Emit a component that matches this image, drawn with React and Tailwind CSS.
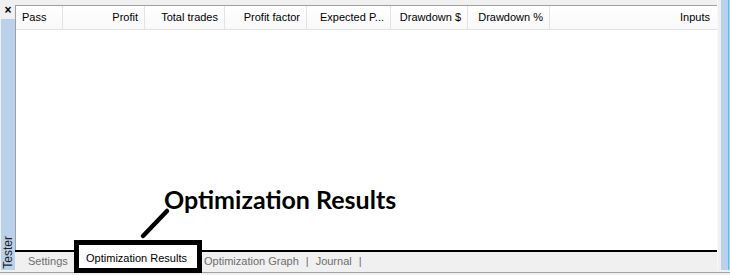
import React from "react";

const cols = [
  { label: "Pass", w: "w-[47px]", align: "text-left pl-[6px] justify-start" },
  { label: "Profit", w: "w-[82px]", align: "text-right pr-[6px] justify-end" },
  { label: "Total trades", w: "w-[80px]", align: "text-right pr-[6px] justify-end" },
  { label: "Profit factor", w: "w-[82px]", align: "text-right pr-[6px] justify-end" },
  { label: "Expected P...", w: "w-[84px]", align: "text-right pr-[6px] justify-end" },
  { label: "Drawdown $", w: "w-[77px]", align: "text-right pr-[6px] justify-end" },
  { label: "Drawdown %", w: "w-[82px]", align: "text-right pr-[6px] justify-end" },
];

export default function App() {
  return (
    <div
      className="relative w-[730px] h-[275px] bg-[#f0f0f0] overflow-hidden flex flex-col"
      style={{ fontFamily: '"Liberation Sans", Arial, sans-serif' }}
    >
      <div className="flex flex-1 min-h-0">
        {/* left sidebar */}
        <div className="w-[15px] flex flex-col">
          <div className="h-[19px] flex items-center justify-center pl-[1px] text-[12px] font-bold text-black leading-none">
            ×
          </div>
          <div className="flex-1 ml-[1px] bg-[#b9d1ea] flex items-end justify-center pb-[1px]">
            <div className="[writing-mode:vertical-rl] rotate-180 text-[12px] text-[#1e1e1e] leading-[14px]">
              Tester
            </div>
          </div>
        </div>

        {/* main */}
        <div className="flex-1 flex flex-col pt-[5px]">
          <div className="flex-1 flex flex-col bg-white border-l border-t border-[#a0a0a0]">
            <div className="h-[24px] flex border-b border-[#e3e3e3] bg-gradient-to-b from-white to-[#f9f9f9] text-[11px] text-black">
              {cols.map((c) => (
                <div
                  key={c.label}
                  className={`${c.w} ${c.align} shrink-0 border-r border-[#e3e3e3] flex items-center whitespace-nowrap overflow-hidden`}
                >
                  {c.label}
                </div>
              ))}
              <div className="flex-1 flex items-center justify-end pr-[7px]">Inputs</div>
            </div>
            <div className="flex-1" />
          </div>
          {/* tabs */}
          <div className="h-[20px] border-t-2 border-black bg-[#f0f0f0] flex items-center text-[11px] text-[#6d6d6d]">
            <div className="pl-[13px] w-[58px]">Settings</div>
            <div className="w-[128px] h-[20px]" />
            <div className="pl-[3px] flex items-center gap-[7px]">
              <span>Optimization Graph</span>
              <span>|</span>
              <span>Journal</span>
              <span>|</span>
            </div>
          </div>
        </div>

        {/* right */}
        <div className="w-[13px] flex">
          <div className="w-[4px] bg-[#f0f0f0] border-l border-[#f8f8f8]" />
          <div className="flex-1 bg-[#b9d1ea] flex justify-end">
            <div className="w-[1px] mr-[1px] bg-[#4fc3f7]" />
          </div>
        </div>
      </div>
      <div className="h-[5px] flex flex-col">
        <div className="h-[2px]" />
        <div className="h-[1px] bg-[#a0a0a0]" />
      </div>

      {/* selected tab with annotation box */}
      <div className="absolute left-[74px] top-[240px] w-[128px] h-[33px] border-[5px] border-black bg-white flex items-center justify-center">
        <span className="text-[11px] text-black pt-[4px] pr-[3px]">Optimization Results</span>
      </div>

      {/* annotation */}
      <svg className="absolute left-0 top-0" width="730" height="275">
        <line x1="143" y1="236" x2="167" y2="211" stroke="black" strokeWidth="4.5" strokeLinecap="round" />
      </svg>
      <div
        className="absolute left-[164px] top-[184px] text-[25px] font-bold text-black leading-[30px] whitespace-nowrap"
        style={{ fontFamily: 'Lato, "Open Sans", sans-serif' }}
      >
        Optimization Results
      </div>
    </div>
  );
}
